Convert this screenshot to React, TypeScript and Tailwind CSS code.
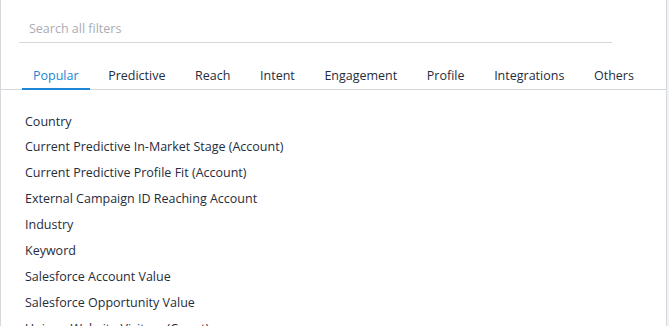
const tabs = [
  "Popular",
  "Predictive",
  "Reach",
  "Intent",
  "Engagement",
  "Profile",
  "Integrations",
  "Others",
];

const filters = [
  "Country",
  "Current Predictive In-Market Stage (Account)",
  "Current Predictive Profile Fit (Account)",
  "External Campaign ID Reaching Account",
  "Industry",
  "Keyword",
  "Salesforce Account Value",
  "Salesforce Opportunity Value",
  "Unique Website Visitors (Count)",
];

export default function App() {
  return (
    <div className="flex h-[326px] w-full overflow-hidden bg-[#f1f2f4] font-['Open_Sans',sans-serif]">
      <div className="flex min-w-0 flex-1 flex-col border-x border-[#d5d8dc] bg-white">
        <div className="pl-[18px] pr-[54px] pt-[14px]">
          <input
            type="text"
            placeholder="Search all filters"
            className="h-[29px] w-full border-b border-[#d3d6da] px-[10px] text-[12.5px] text-[#1f2d3d] outline-none placeholder:text-[#a9adb3]"
          />
        </div>

        <ul className="mt-[20px] flex gap-[7.6px] border-b border-[#d3d6da] pl-[21px]">
          {tabs.map((tab, i) => (
            <li
              key={tab}
              className={
                i === 0
                  ? "-mb-px flex h-[27px] items-center border-b-2 border-[#1b87d6] px-[11px] pt-[2px] text-[12.5px] text-[#1b87d6]"
                  : "-mb-px flex h-[27px] items-center border-b-2 border-transparent px-[11px] pt-[2px] text-[12.5px] text-[#1f2d3d]"
              }
            >
              {tab}
            </li>
          ))}
        </ul>

        <ul className="pl-[24px] pt-[19px]">
          {filters.map((f) => (
            <li
              key={f}
              className="flex h-[25.9px] items-center text-[12.5px] text-[#1f2d3d]"
            >
              {f}
            </li>
          ))}
        </ul>
      </div>
      <div className="w-[2px]" />
    </div>
  );
}
